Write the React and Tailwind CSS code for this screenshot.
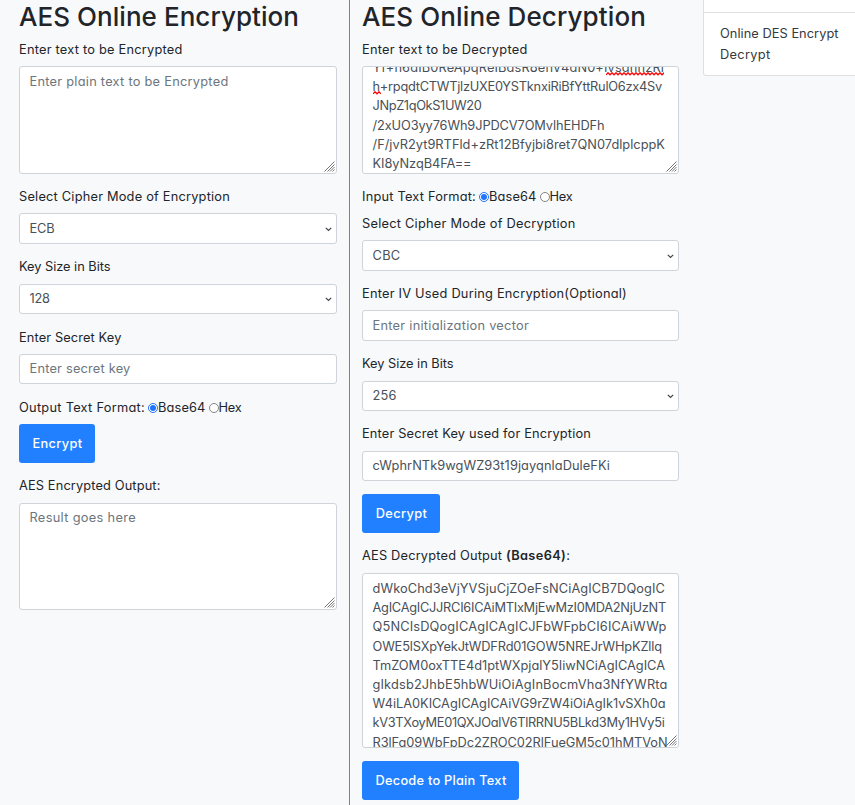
import React, { useLayoutEffect, useRef, useState } from "react";

// Single line of text whose letter spacing is adjusted to span a given width.
function Fit({ w, children, className = "" }) {
  const ref = useRef(null);
  const [spacing, setSpacing] = useState(0);
  useLayoutEffect(() => {
    const el = ref.current;
    const natural = el.getBoundingClientRect().width - spacing * el.textContent.length;
    setSpacing((w - natural) / el.textContent.length);
  }, [w]);
  return (
    <span ref={ref} className={`inline-block whitespace-pre ${className}`} style={{ letterSpacing: `${spacing}px` }}>
      {children}
    </span>
  );
}

function Label({ w, className = "mt-[13px] mb-2", children }) {
  return (
    <div className={`flex h-[19px] items-center text-[#212529] ${className}`}>
      <Fit w={w}>{children}</Fit>
    </div>
  );
}

function Box({ className = "h-[30px]", children }) {
  return (
    <div className={`relative overflow-hidden rounded-[3px] border border-[#ced4da] bg-white px-[9.5px] ${className}`}>
      {children}
    </div>
  );
}

function Field({ w, className = "h-[30px]", color = "text-[#495057]", select, children }) {
  return (
    <Box className={`flex items-center justify-between ${color} ${className}`}>
      <Fit w={w}>{children}</Fit>
      {select && (
        <svg className="-mr-[5px] mt-px" width="7" height="5" viewBox="0 0 7 5" fill="none" stroke="#3f464d" strokeWidth="1.2">
          <path d="M0.8 0.8 L3.5 3.5 L6.2 0.8" />
        </svg>
      )}
    </Box>
  );
}

function Grip() {
  return (
    <svg className="absolute right-px bottom-px" width="11" height="11" viewBox="0 0 11 11" stroke="#666" strokeWidth="0.9">
      <path d="M0.5 10.5 L10.5 0.5 M3.5 10.5 L10.5 3.5 M6 10.5 L10.5 6 M8.5 10.5 L10.5 8.5" />
    </svg>
  );
}

function Squiggle({ width, className }) {
  let d = "M0 2.8";
  for (let x = 2, up = true; x <= width; x += 2, up = !up) d += ` L${x} ${up ? 0.8 : 2.8}`;
  return (
    <svg className={`absolute ${className}`} width={width} height="4" viewBox={`0 0 ${width} 4`} fill="none" stroke="#f00" strokeWidth="1.3">
      <path d={d} />
    </svg>
  );
}

function Radio({ checked, className = "" }) {
  return (
    <span
      className={`flex size-[10px] shrink-0 items-center justify-center rounded-full border bg-white ${
        checked ? "border-[#1f75fe]" : "border-[#858585]"
      } ${className}`}
    >
      {checked && <span className="size-[6px] rounded-full bg-[#1f75fe]" />}
    </span>
  );
}

function FormatRow({ label, w, className = "mt-[13px] mb-2" }) {
  return (
    <div className={`flex h-[19px] items-center text-[#212529] ${className}`}>
      <Fit w={w}>{label}</Fit>
      <Radio checked className="ml-[3px]" />
      <Fit w={47.5}>Base64</Fit>
      <Radio className="ml-[3px]" />
      <Fit w={23}>Hex</Fit>
    </div>
  );
}

function Button({ w, className, children }) {
  return (
    <div className={`flex h-[39px] items-center justify-center rounded-[3px] bg-[#2080ff] pl-px font-medium text-white ${className}`}>
      <Fit w={w}>{children}</Fit>
    </div>
  );
}

const cipherLines = [
  ["Yf+n6dIB0ReApqReIBdsR8ehV4dN0+IvsdhhzRl", 291.5],
  ["h+rpqdtCTWTjlzUXE0YSTknxiRiBfYttRulO6zx4Sv", 289.5],
  ["JNpZ1qOkS1UW20", 109],
  ["/2xUO3yy76Wh9JPDCV7OMvlhEHDFh", 232],
  ["/F/jvR2yt9RTFld+zRt12Bfyjbi8ret7QN07dlplcppK", 292.5],
  ["KI8yNzqB4FA==", 99],
];

const outputLines = [
  ["dWkoChd3eVjYVSjuCjZOeFsNCiAgICB7DQogIC", 292.5],
  ["AgICAgICJJRCI6ICAiMTIxMjEwMzI0MDA2NjUzNT", 293.5],
  ["Q5NCIsDQogICAgICAgICJFbWFpbCI6ICAiWWp", 294],
  ["OWE5lSXpYekJtWDFRd01GOW5NREJrWHpKZllq", 289.5],
  ["TmZOM0oxTTE4d1ptWXpjalY5IiwNCiAgICAgICA", 292.5],
  ["gIkdsb2JhbE5hbWUiOiAgInBocmVha3NfYWRta", 295],
  ["W4iLA0KICAgICAgICAiVG9rZW4iOiAgIk1vSXh0a", 293],
  ["kV3TXoyME01QXJOalV6TlRRNU5BLkd3My1HVy5i", 292],
  ["R3lFa09WbFpDc2ZROC02RlFueGM5c01hMTVoN", 295],
];

function Lines({ lines }) {
  return lines.map(([text, w]) => (
    <div key={text} className="h-[19.2px]">
      <Fit w={w}>{text}</Fit>
    </div>
  ));
}

const heading = "flex h-8 items-center pt-px text-[26px] leading-8 font-[460] text-[#212529]";

export default function App() {
  return (
    <div className="flex h-[805px] w-[855px] overflow-hidden bg-[#f8f9fb] font-[Inter,'Open_Sans',sans-serif] text-[12.8px] leading-[19.2px] font-[380] [font-feature-settings:'cv11']">
      <section className="w-[350px] shrink-0 border-r border-[#808285] pr-3 pl-[19px]">
        <h1 className={heading}>
          <Fit w={280}>AES Online Encryption</Fit>
        </h1>
        <Label w={163.5} className="mt-2 mb-[7px]">Enter text to be Encrypted</Label>
        <Box className="h-[108px] pt-[5px] text-[#6c757d]">
          <Fit w={199}>Enter plain text to be Encrypted</Fit>
          <Grip />
        </Box>
        <Label w={211} className="mt-[13px] mb-[7px]">Select Cipher Mode of Encryption</Label>
        <Field select w={25} className="h-[31px]">ECB</Field>
        <Label w={91.5}>Key Size in Bits</Label>
        <Field select w={20}>128</Field>
        <Label w={102.5} className="mt-[14px] mb-[7px]">Enter Secret Key</Label>
        <Field w={101} color="text-[#6c757d]">Enter secret key</Field>
        <FormatRow label="Output Text Format:" w={126} className="mt-[14px] mb-[7px]" />
        <Button w={50} className="w-[76px]">Encrypt</Button>
        <Label w={141.5}>AES Encrypted Output:</Label>
        <Box className="h-[107px] pt-1 text-[#6c757d]">
          <Fit w={106.5}>Result goes here</Fit>
          <Grip />
        </Box>
      </section>

      <section className="w-[341px] shrink-0 pr-3 pl-3">
        <h1 className={heading}>
          <Fit w={284}>AES Online Decryption</Fit>
        </h1>
        <Label w={165.5} className="mt-2 mb-[7px]">Enter text to be Decrypted</Label>
        <Box className="h-[108px] text-[#495057]">
          <div className="-mt-[9px]">
            <Lines lines={cipherLines} />
          </div>
          <Squiggle width={58} className="top-[5px] left-[243px]" />
          <Squiggle width={8} className="top-[24px] left-[10px]" />
          <Grip />
        </Box>
        <FormatRow label="Input Text Format:" w={114} />
        <Label w={213.5} className="mb-[7px]">Select Cipher Mode of Decryption</Label>
        <Field select w={28} className="h-[31px]">CBC</Field>
        <Label w={265} className="mt-[13px] mb-[7px]">Enter IV Used During Encryption(Optional)</Label>
        <Field w={156.5} className="h-[31px]" color="text-[#6c757d]">Enter initialization vector</Field>
        <Label w={91.5}>Key Size in Bits</Label>
        <Field select w={24}>256</Field>
        <Label w={229}>Enter Secret Key used for Encryption</Label>
        <Field w={237.5}>cWphrNTk9wgWZ93t19jayqnlaDuleFKi</Field>
        <Button w={51.5} className="mt-[13px] w-[78px]">Decrypt</Button>
        <div className="mt-[13px] mb-2 flex h-[19px] items-center text-[#212529]">
          <Fit w={144}>{"AES Decrypted Output "}</Fit>
          <Fit w={60} className="font-semibold">(Base64)</Fit>
          <span>:</span>
        </div>
        <Box className="h-[175px] pt-[5px] text-[#495057]">
          <Lines lines={outputLines} />
          <Grip />
        </Box>
        <Button w={131} className="mt-[13px] w-[157px]">Decode to Plain Text</Button>
      </section>

      <aside className="ml-3 h-[76px] w-[180px] shrink-0 rounded-b-[3px] border border-t-0 border-[#dfdfdf] bg-white text-[#343a40]">
        <div className="h-[13px] border-b border-[#dfdfdf]" />
        <div className="pt-[10px] pl-4 leading-[21px]">
          <Fit w={118.5} className="block w-fit">Online DES Encrypt</Fit>
          <Fit w={50.5} className="block w-fit">Decrypt</Fit>
        </div>
      </aside>
    </div>
  );
}
